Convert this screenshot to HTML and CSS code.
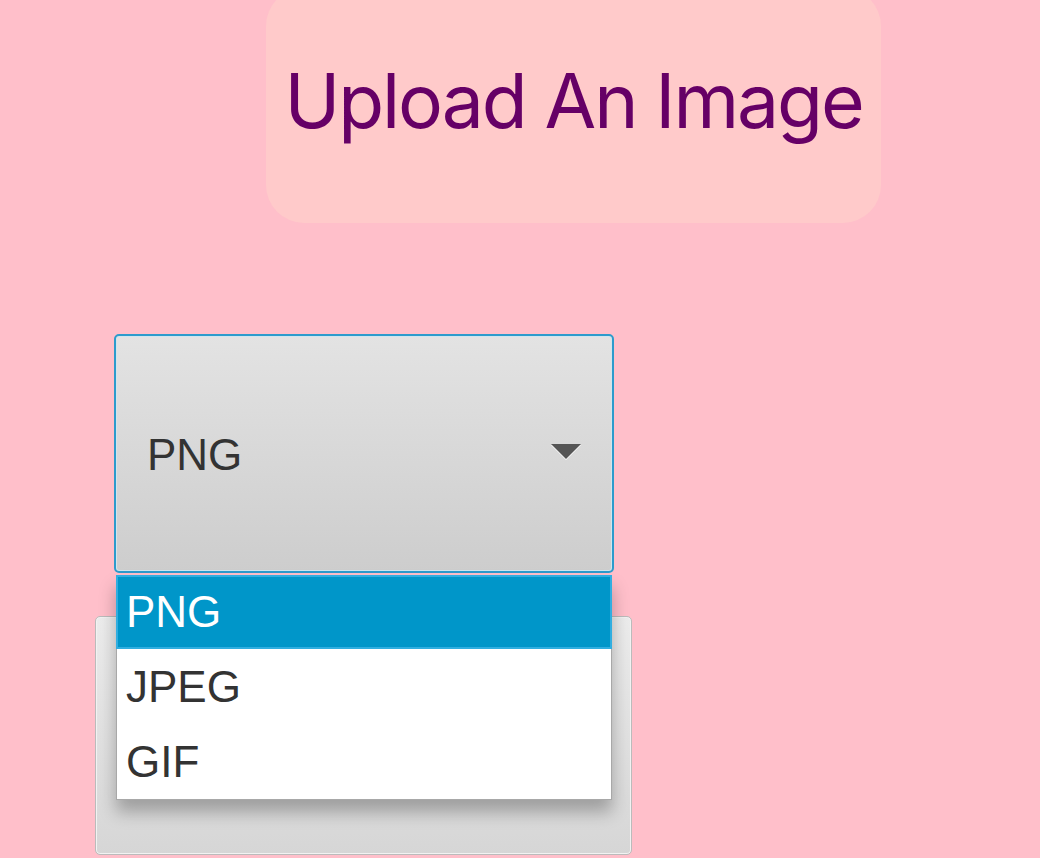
FILE: index.html
```html
<!DOCTYPE html>
<html>
<head>
<meta charset="utf-8">
<link rel="stylesheet" href="styles.css">
</head>
<body>
<div class="page">
  <header class="title-box">
    <h1 class="title">Upload An Image</h1>
  </header>
  <div class="select-wrap">
    <div class="select">
      <span class="select-value">PNG</span>
      <span class="arrow"></span>
    </div>
    <ul class="menu">
      <li class="option selected">PNG</li>
      <li class="option">JPEG</li>
      <li class="option">GIF</li>
    </ul>
  </div>
  <div class="upload-box"></div>
</div>
</body>
</html>
```
FILE: styles.css
```css
html, body {
  margin: 0;
  padding: 0;
  background: #ffbfca;
  height: 100%;
  overflow: hidden;
}
.page {
  display: flex;
  flex-direction: column;
  align-items: flex-start;
}
.title-box {
  margin-top: -12px;
  margin-left: 266px;
  width: 615px;
  height: 235px;
  background: #ffcaca;
  border-radius: 38px;
  display: flex;
  align-items: center;
  justify-content: center;
}
.title {
  margin: 0;
  font-family: Inter, "Noto Sans", sans-serif;
  font-weight: 400;
  font-size: 75px;
  color: #660066;
  letter-spacing: -2.1px;
  white-space: nowrap;
  padding-bottom: 10px;
}
.select-wrap {
  position: relative;
  margin-top: 111px;
  margin-left: 114px;
  z-index: 2;
}
.select {
  box-sizing: border-box;
  width: 500px;
  height: 239px;
  border: 2px solid #2d9bcc;
  border-radius: 5px;
  box-shadow: inset 0 0 0 1px #cfe6ef;
  background: linear-gradient(#e3e3e3, #cdcdcd);
  display: flex;
  align-items: center;
  justify-content: space-between;
  padding: 0 31px 0 31px;
  font-family: "Liberation Sans", Arial, sans-serif;
  font-size: 44px;
  color: #333;
}
.select-value {
  padding-top: 2px;
}
.arrow {
  width: 0;
  height: 0;
  border-left: 15px solid transparent;
  border-right: 15px solid transparent;
  border-top: 15px solid #555;
  filter: drop-shadow(0 1px 0 #fff);
  margin-top: -4px;
}
.menu {
  position: absolute;
  top: 241px;
  left: 2px;
  width: 496px;
  margin: 0;
  padding: 0;
  list-style: none;
  background: #fff;
  box-sizing: border-box;
  border: 1px solid #a8a8a8;
  border-top: none;
  box-shadow: 0 12px 16px rgba(0, 0, 0, 0.28);
  font-family: "Liberation Sans", Arial, sans-serif;
  font-size: 44px;
  color: #333;
}
.option {
  height: 75px;
  display: flex;
  align-items: center;
  padding-left: 9px;
  box-sizing: border-box;
}
.option.selected {
  background: #0096c9;
  color: #fff;
  border: 2px solid #30aee0;
  height: 74px;
  padding-left: 8px;
  margin: 0 -1px;
}
.upload-box {
  margin-top: 43px;
  margin-left: 95px;
  box-sizing: border-box;
  width: 537px;
  height: 239px;
  border: 1px solid #bbb;
  border-radius: 5px;
  background: linear-gradient(#ececec, #d6d6d6);
  box-shadow: inset 0 0 0 1px #f2f2f2;
}
```
